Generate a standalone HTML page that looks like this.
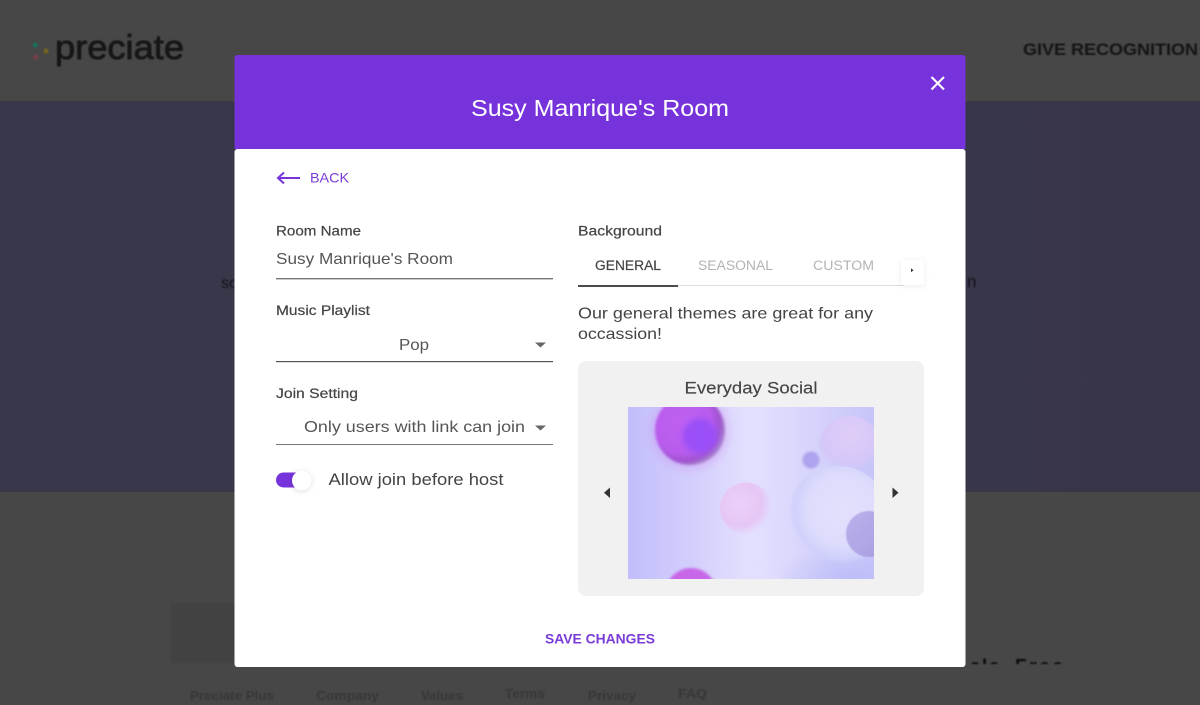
<!DOCTYPE html>
<html><head><meta charset="utf-8"><style>
html,body{margin:0;padding:0;background:#474747;width:1200px;height:705px;overflow:hidden}
svg{display:block}
text{font-family:"Liberation Sans",sans-serif;white-space:pre}
</style></head><body>
<svg width="1200" height="705" viewBox="0 0 1200 705" xmlns="http://www.w3.org/2000/svg">
<defs>
<filter id="b1" x="-30%" y="-30%" width="160%" height="160%"><feGaussianBlur stdDeviation="1.2"/></filter>
<filter id="b3" x="-50%" y="-50%" width="200%" height="200%"><feGaussianBlur stdDeviation="4"/></filter>
<filter id="sh" x="-50%" y="-50%" width="200%" height="200%"><feDropShadow dx="0" dy="1" stdDeviation="3" flood-color="#000" flood-opacity=".14"/></filter>
<filter id="sh2" x="-50%" y="-50%" width="200%" height="200%"><feDropShadow dx="0" dy="1" stdDeviation="3" flood-color="#000" flood-opacity=".08"/></filter>
<filter id="soft"><feGaussianBlur stdDeviation=".45"/></filter>
<linearGradient id="hero" x1="0" x2="1" y1="0" y2="0"><stop offset="0" stop-color="#38384a"/><stop offset="1" stop-color="#383549"/></linearGradient>
<linearGradient id="bgimg" x1="0" x2="1" y1="0" y2="0"><stop offset="0" stop-color="#c2bdfb"/><stop offset=".25" stop-color="#d2cefc"/><stop offset=".5" stop-color="#e3e0fe"/><stop offset=".72" stop-color="#d8d5fc"/><stop offset="1" stop-color="#c7c4f9"/></linearGradient>
<radialGradient id="ball" cx=".4" cy=".42" r=".6"><stop offset="0" stop-color="#c161f3"/><stop offset=".7" stop-color="#b85cec"/><stop offset=".88" stop-color="#a053d0"/><stop offset="1" stop-color="#9468b8" stop-opacity=".7"/></radialGradient>
<radialGradient id="pink" cx=".38" cy=".4" r=".62"><stop offset="0" stop-color="#ecd0f9"/><stop offset=".7" stop-color="#e6c6f4"/><stop offset="1" stop-color="#e4c8f6" stop-opacity="0"/></radialGradient>
<radialGradient id="pale" cx=".55" cy=".42" r=".52"><stop offset="0" stop-color="#e3e0fd"/><stop offset=".65" stop-color="#dedcfc"/><stop offset=".9" stop-color="#d0d1fb"/><stop offset="1" stop-color="#cfd0fa" stop-opacity="0"/></radialGradient>
<radialGradient id="pk2" cx=".5" cy=".3" r=".6"><stop offset="0" stop-color="#dfcdf7"/><stop offset=".75" stop-color="#d5c7f8"/><stop offset="1" stop-color="#d0c6f8" stop-opacity="0"/></radialGradient>
<radialGradient id="bot"><stop offset="0" stop-color="#bcbdf8"/><stop offset="1" stop-color="#bfc0f8" stop-opacity="0"/></radialGradient>
<linearGradient id="dark" x1="0" x2="1" y1="0" y2="1"><stop offset="0" stop-color="#bcb1ec"/><stop offset="1" stop-color="#a79ce0"/></linearGradient>
<clipPath id="img"><rect x="628" y="407" width="246" height="172"/></clipPath>
<clipPath id="cut"><rect x="966" y="650" width="120" height="14"/></clipPath>
</defs>

<!-- page behind overlay -->
<rect width="1200" height="705" fill="#474747"/>
<rect y="101" width="1200" height="391" fill="url(#hero)"/>
<rect x="171" y="603" width="70" height="60" fill="#424242" filter="url(#soft)"/>

<g filter="url(#soft)">
<circle cx="35.300" cy="45" r="2.700" fill="#1f6a58"/>
<circle cx="46" cy="51" r="2.700" fill="#6f6426"/>
<circle cx="35.700" cy="57.300" r="2.700" fill="#75404a"/>
<text x="55" y="59" font-size="34" stroke="#141416" stroke-width=".7" fill="#141416" textLength="129" lengthAdjust="spacingAndGlyphs">preciate</text>
<text x="1023" y="55" font-size="16.500" font-weight="700" fill="#141416" textLength="175" lengthAdjust="spacingAndGlyphs">GIVE RECOGNITION</text>
<text x="221" y="288" font-size="16" fill="#17171d">so</text>
<text x="967" y="287" font-size="17" fill="#17171d">n</text>
<g clip-path="url(#cut)" font-size="19" font-weight="700" fill="#111">
<text x="970" y="672.500" textLength="36" lengthAdjust="spacing">ale.</text>
<text x="1015" y="672.500" textLength="48" lengthAdjust="spacing">Free</text>
</g>
<g font-size="13" font-weight="700" fill="#383838">
<text x="190" y="700" textLength="84" lengthAdjust="spacingAndGlyphs">Preciate Plus</text>
<text x="316" y="700" textLength="63" lengthAdjust="spacingAndGlyphs">Company</text>
<text x="421" y="700" textLength="42" lengthAdjust="spacingAndGlyphs">Values</text>
<text x="505" y="698" textLength="40" lengthAdjust="spacingAndGlyphs">Terms</text>
<text x="588" y="700" textLength="48" lengthAdjust="spacingAndGlyphs">Privacy</text>
<text x="678" y="698" textLength="29" lengthAdjust="spacingAndGlyphs">FAQ</text>
</g>
</g>

<!-- modal -->
<rect x="234.500" y="149" width="731" height="518" rx="3" fill="#fff"/>
<path d="M234.500 149V58a3 3 0 0 1 3-3H962.500a3 3 0 0 1 3 3V149Z" fill="#7733db"/>
<text x="600" y="116" font-size="23" fill="#fff" text-anchor="middle" textLength="258" lengthAdjust="spacingAndGlyphs">Susy Manrique's Room</text>
<path d="M931.500 77 L944 89.500 M944 77 L931.500 89.500" stroke="#fff" stroke-width="2.100" fill="none"/>

<path d="M300 178H278.500M284 172.500L278 178L284 183.500" stroke="#7733db" stroke-width="2" fill="none"/>
<text x="310" y="182.500" font-size="14" fill="#7a3bd8" textLength="39" lengthAdjust="spacingAndGlyphs">BACK</text>

<!-- left column -->
<g fill="#444" stroke="#444" stroke-width=".2">
<text x="276" y="235.500" font-size="13.500" textLength="85" lengthAdjust="spacingAndGlyphs">Room Name</text>
<text x="276" y="315" font-size="13.500" textLength="94" lengthAdjust="spacingAndGlyphs">Music Playlist</text>
<text x="276" y="398" font-size="13.500" textLength="82" lengthAdjust="spacingAndGlyphs">Join Setting</text>
</g>
<g fill="#555">
<text x="276" y="264" font-size="16" textLength="177" lengthAdjust="spacingAndGlyphs">Susy Manrique's Room</text>
<text x="399" y="350" font-size="16" textLength="30" lengthAdjust="spacingAndGlyphs">Pop</text>
<text x="304" y="432" font-size="16" textLength="221" lengthAdjust="spacingAndGlyphs">Only users with link can join</text>
</g>
<rect x="276" y="278" width="277" height="1.400" fill="#777"/>
<rect x="276" y="361" width="277" height="1.200" fill="#555"/>
<rect x="276" y="444" width="277" height="1" fill="#777"/>
<path d="M535 342.500H546L540.500 347.500Z" fill="#666"/>
<path d="M535 425.500H546L540.500 430.500Z" fill="#666"/>

<rect x="276" y="472.500" width="34" height="15" rx="7.500" fill="#7733db"/>
<circle cx="301.700" cy="480.500" r="9.700" fill="#fff" filter="url(#sh)"/>
<text x="328.500" y="485" font-size="16.500" fill="#444" textLength="175" lengthAdjust="spacingAndGlyphs">Allow join before host</text>

<!-- right column -->
<text x="578" y="235.500" font-size="13.500" fill="#444" stroke="#444" stroke-width=".2" textLength="84" lengthAdjust="spacingAndGlyphs">Background</text>
<rect x="578" y="285" width="326" height="1" fill="#ddd"/>
<rect x="578" y="285" width="100" height="2" fill="#4a4a4a"/>
<text x="595" y="270" font-size="13.500" fill="#444" stroke="#444" stroke-width=".2" textLength="66" lengthAdjust="spacingAndGlyphs">GENERAL</text>
<text x="698" y="270" font-size="13.500" fill="#b3b3b3" textLength="75" lengthAdjust="spacingAndGlyphs">SEASONAL</text>
<text x="813" y="270" font-size="13.500" fill="#b3b3b3" textLength="61" lengthAdjust="spacingAndGlyphs">CUSTOM</text>
<rect x="901" y="260" width="23" height="25" fill="#fff" filter="url(#sh2)"/>
<path d="M911 268.300L913.500 270.300L911 272.300Z" fill="#333"/>

<text x="578" y="318.500" font-size="16" fill="#444" textLength="295" lengthAdjust="spacingAndGlyphs">Our general themes are great for any</text>
<text x="578" y="339" font-size="16" fill="#444" textLength="84" lengthAdjust="spacingAndGlyphs">occassion!</text>

<rect x="578" y="361" width="346" height="235" rx="8" fill="#f1f1f1"/>
<text x="751" y="393.500" font-size="17" fill="#444" text-anchor="middle" stroke="#444" stroke-width=".15" textLength="133" lengthAdjust="spacingAndGlyphs">Everyday Social</text>

<rect x="628" y="407" width="246" height="172" fill="url(#bgimg)"/>
<g clip-path="url(#img)">
<ellipse cx="850" cy="580" rx="75" ry="35" fill="url(#bot)"/>
<circle cx="850" cy="447" r="31" fill="url(#pk2)"/>
<circle cx="838" cy="518" r="52" fill="url(#pale)"/>
<circle cx="690" cy="431" r="40" fill="#d28cf3" opacity=".3" filter="url(#b3)"/>
<circle cx="690" cy="430" r="35" fill="url(#ball)" filter="url(#b1)"/>
<circle cx="700" cy="436" r="17.500" fill="#9b50f6" filter="url(#b3)"/>
<circle cx="700" cy="436" r="15" fill="#9b50f6" filter="url(#b1)"/>
<circle cx="746" cy="508.500" r="26" fill="url(#pink)"/>
<circle cx="811" cy="460" r="8.500" fill="#ada3ee" filter="url(#b1)"/>
<circle cx="869" cy="534" r="23" fill="url(#dark)" filter="url(#soft)"/>
<circle cx="691" cy="594" r="26" fill="#c867e8" filter="url(#b1)"/>
</g>

<path d="M610 487.500V498L604 492.750Z" fill="#333"/>
<path d="M892.500 487.500V498L898.500 492.750Z" fill="#333"/>

<text x="600" y="643.500" font-size="13.500" font-weight="700" fill="#7a3bd8" text-anchor="middle" textLength="110" lengthAdjust="spacingAndGlyphs">SAVE CHANGES</text>
</svg>
</body></html>
